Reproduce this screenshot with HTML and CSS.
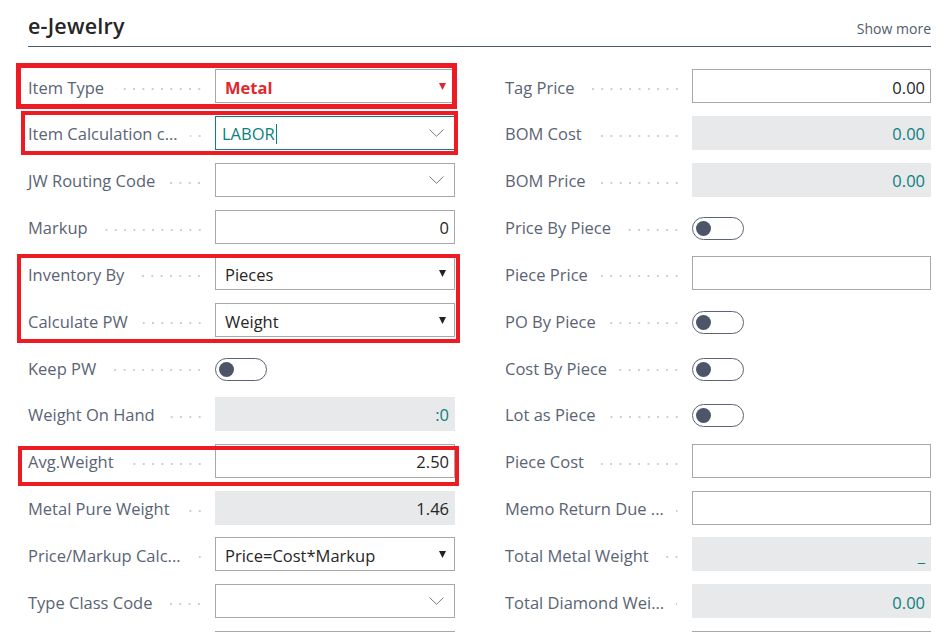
FILE: index.html
```html
<!DOCTYPE html>
<html lang="en">
<head>
<meta charset="utf-8">
<title>e-Jewelry</title>
<link rel="stylesheet" href="styles.css">
</head>
<body>
<div class="page">
  <header class="head">
    <h1 class="title">e-Jewelry</h1>
    <a class="more">Show more</a>
  </header>
  <div class="cols">
    <div class="col">
      <div class="row hl">
        <span class="mark m1"></span>
        <label class="lbl"><span class="txt">Item Type</span><span class="dots"></span></label>
        <div class="ctl sel"><span class="val metal">Metal</span><svg class="caret" width="7" height="7" viewBox="0 0 7 7"><polygon points="0,0 7,0 3.5,7" fill="#e3262b"/></svg></div>
      </div>
      <div class="row hl">
        <span class="mark m2"></span>
        <label class="lbl"><span class="txt">Item Calculation c...</span><span class="dots"></span></label>
        <div class="ctl focus"><span class="val teal">LABOR</span><span class="cursor"></span><svg class="chev" width="15" height="8" viewBox="0 0 15 8"><polyline points="0.5,0.5 7.5,7.3 14.5,0.5" fill="none" stroke="#7a7a7a" stroke-width="1"/></svg></div>
      </div>
      <div class="row">
        <label class="lbl"><span class="txt">JW Routing Code</span><span class="dots"></span></label>
        <div class="ctl"><svg class="chev" width="15" height="8" viewBox="0 0 15 8"><polyline points="0.5,0.5 7.5,7.3 14.5,0.5" fill="none" stroke="#7a7a7a" stroke-width="1"/></svg></div>
      </div>
      <div class="row">
        <label class="lbl"><span class="txt">Markup</span><span class="dots"></span></label>
        <div class="ctl num"><span class="val">0</span></div>
      </div>
      <div class="grp hl">
        <span class="mark m3"></span>
        <div class="row">
          <label class="lbl"><span class="txt">Inventory By</span><span class="dots"></span></label>
          <div class="ctl sel"><span class="val">Pieces</span><svg class="caret" width="7" height="7" viewBox="0 0 7 7"><polygon points="0,0 7,0 3.5,7" fill="#222"/></svg></div>
        </div>
        <div class="row">
          <label class="lbl"><span class="txt">Calculate PW</span><span class="dots"></span></label>
          <div class="ctl sel"><span class="val">Weight</span><svg class="caret" width="7" height="7" viewBox="0 0 7 7"><polygon points="0,0 7,0 3.5,7" fill="#222"/></svg></div>
        </div>
      </div>
      <div class="row">
        <label class="lbl"><span class="txt">Keep PW</span><span class="dots"></span></label>
        <span class="tgl"><span class="knob"></span></span>
      </div>
      <div class="row">
        <label class="lbl"><span class="txt">Weight On Hand</span><span class="dots"></span></label>
        <div class="ctl num ro"><span class="val teal">:0</span></div>
      </div>
      <div class="row hl">
        <span class="mark m4"></span>
        <label class="lbl"><span class="txt">Avg.Weight</span><span class="dots"></span></label>
        <div class="ctl num"><span class="val">2.50</span></div>
      </div>
      <div class="row">
        <label class="lbl"><span class="txt">Metal Pure Weight</span><span class="dots"></span></label>
        <div class="ctl num ro"><span class="val">1.46</span></div>
      </div>
      <div class="row">
        <label class="lbl"><span class="txt">Price/Markup Calc...</span><span class="dots"></span></label>
        <div class="ctl sel"><span class="val">Price=Cost*Markup</span><svg class="caret" width="7" height="7" viewBox="0 0 7 7"><polygon points="0,0 7,0 3.5,7" fill="#222"/></svg></div>
      </div>
      <div class="row">
        <label class="lbl"><span class="txt">Type Class Code</span><span class="dots"></span></label>
        <div class="ctl"><svg class="chev" width="15" height="8" viewBox="0 0 15 8"><polyline points="0.5,0.5 7.5,7.3 14.5,0.5" fill="none" stroke="#7a7a7a" stroke-width="1"/></svg></div>
      </div>
      <div class="row">
        <label class="lbl"><span class="txt"></span><span class="dots"></span></label>
        <div class="ctl"></div>
      </div>
    </div>

    <div class="col">
      <div class="row">
        <label class="lbl"><span class="txt">Tag Price</span><span class="dots"></span></label>
        <div class="ctl num"><span class="val">0.00</span></div>
      </div>
      <div class="row">
        <label class="lbl"><span class="txt">BOM Cost</span><span class="dots"></span></label>
        <div class="ctl num ro"><span class="val teal">0.00</span></div>
      </div>
      <div class="row">
        <label class="lbl"><span class="txt">BOM Price</span><span class="dots"></span></label>
        <div class="ctl num ro"><span class="val teal">0.00</span></div>
      </div>
      <div class="row">
        <label class="lbl"><span class="txt">Price By Piece</span><span class="dots"></span></label>
        <span class="tgl"><span class="knob"></span></span>
      </div>
      <div class="row">
        <label class="lbl"><span class="txt">Piece Price</span><span class="dots"></span></label>
        <div class="ctl num"></div>
      </div>
      <div class="row">
        <label class="lbl"><span class="txt">PO By Piece</span><span class="dots"></span></label>
        <span class="tgl"><span class="knob"></span></span>
      </div>
      <div class="row">
        <label class="lbl"><span class="txt">Cost By Piece</span><span class="dots"></span></label>
        <span class="tgl"><span class="knob"></span></span>
      </div>
      <div class="row">
        <label class="lbl"><span class="txt">Lot as Piece</span><span class="dots"></span></label>
        <span class="tgl"><span class="knob"></span></span>
      </div>
      <div class="row">
        <label class="lbl"><span class="txt">Piece Cost</span><span class="dots"></span></label>
        <div class="ctl num"></div>
      </div>
      <div class="row">
        <label class="lbl"><span class="txt">Memo Return Due ...</span><span class="dots"></span></label>
        <div class="ctl num"></div>
      </div>
      <div class="row">
        <label class="lbl"><span class="txt">Total Metal Weight</span><span class="dots"></span></label>
        <div class="ctl num ro"><span class="val teal">_</span></div>
      </div>
      <div class="row">
        <label class="lbl"><span class="txt">Total Diamond Wei...</span><span class="dots"></span></label>
        <div class="ctl num ro"><span class="val teal">0.00</span></div>
      </div>
      <div class="row">
        <label class="lbl"><span class="txt"></span><span class="dots"></span></label>
        <div class="ctl"></div>
      </div>
    </div>
  </div>
</div>
</body>
</html>
```

FILE: styles.css
```css
* { box-sizing: border-box; }

html, body {
  margin: 0;
  padding: 0;
  background: #ffffff;
  overflow: hidden;
}

body {
  font-family: "Open Sans", "Noto Sans", "Liberation Sans", sans-serif;
  color: #212121;
}

.page {
  width: 952px;
  padding: 0 21px 0 28px;
}

.head {
  display: flex;
  justify-content: space-between;
  align-items: baseline;
  padding-top: 12px;
  padding-bottom: 6px;
  border-bottom: 1px solid #4f5a68;
}

.title {
  margin: 0;
  font-size: 21.5px;
  font-weight: 600;
  line-height: 28px;
  letter-spacing: 0.2px;
  color: #262626;
}

.more {
  font-size: 14px;
  color: #505c6d;
}

.cols {
  display: grid;
  grid-template-columns: 427px 426px;
  column-gap: 50px;
  margin-top: 22px;
}

.col, .grp {
  display: flex;
  flex-direction: column;
  gap: 12.85px;
}

.hl { position: relative; }

.row {
  display: flex;
  align-items: center;
  height: 34px;
  position: relative;
}

.lbl {
  width: 187px;
  flex: none;
  display: flex;
  align-items: center;
  height: 34px;
  font-size: 16.5px;
  color: #5a6474;
  white-space: nowrap;
}

.txt { padding-top: 2px; }

.dots {
  flex: 1;
  height: 4px;
  margin: 6px 11px 0 12px;
  background-image: radial-gradient(circle, #cdcdcd 0.85px, transparent 1.35px);
  background-size: 9.33px 4px;
  background-position: right center;
  background-repeat: repeat-x;
}

.ctl {
  flex: 1;
  height: 34px;
  border: 1px solid #a8a8a8;
  background: #ffffff;
  display: flex;
  align-items: center;
  padding: 2px 5px 0 9px;
  font-size: 16.5px;
  color: #262626;
  white-space: nowrap;
}

.num { justify-content: flex-end; }

.ro {
  background: #e8e9eb;
  border-color: #e8e9eb;
}

.teal { color: #0e7f80; }

.metal {
  color: #e3262b;
  font-weight: 700;
}

.focus {
  border-color: #0e7f80;
  padding-left: 6px;
}

.cursor {
  width: 1px;
  height: 20px;
  margin-left: 1px;
  background: #0e7f80;
}

.caret {
  margin-left: auto;
  margin-right: 3px;
  margin-top: -2px;
}

.chev {
  margin-left: auto;
  margin-right: 5px;
  margin-top: -2px;
}

.tgl {
  width: 52px;
  height: 23px;
  border: 1px solid #5b6472;
  border-radius: 12px;
  display: flex;
  align-items: center;
  padding-left: 3px;
  margin-top: 4px;
}

.knob {
  width: 15px;
  height: 15px;
  border-radius: 50%;
  background: #4c5668;
}

/* red annotation frames drawn over the fields */
.mark {
  position: absolute;
  border: 4px solid #ed1c24;
  z-index: 2;
  pointer-events: none;
}

.m1 { top: -6.5px; bottom: -5.7px; left: -12px; right: -2px; border-width: 5px; }
.m2 { top: -4.9px; bottom: -5.1px; left: -7.3px; right: -2.5px; }
.m3 { top: -2.4px; bottom: -5.6px; left: -10.7px; right: -5px; }
.m4 { top: 2.2px; bottom: -7.9px; left: -9.7px; right: -4.3px; }
```
